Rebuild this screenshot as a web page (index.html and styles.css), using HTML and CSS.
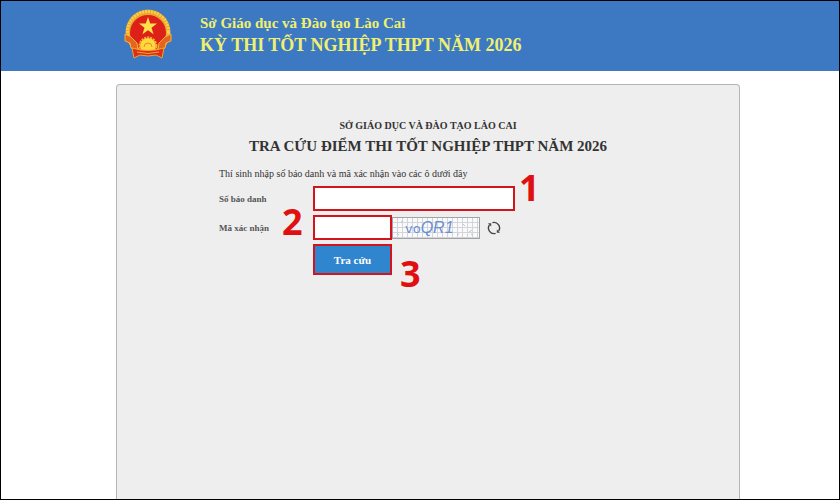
FILE: index.html
```
<!DOCTYPE html>
<html lang="vi">
<head>
  <meta charset="UTF-8">
  <meta name="viewport" content="width=device-width, initial-scale=1">
  <title>Tra cứu điểm thi tốt nghiệp THPT năm 2026</title>
  <link rel="stylesheet" href="styles.css">
</head>
<body>

  <header class="header">
    <div class="container header-inner">
      <svg class="emblem" viewBox="0 0 50 50" aria-hidden="true">
        <circle cx="25" cy="23" r="22.5" fill="#e9a52f"/>
        <circle cx="25" cy="23" r="20.5" fill="none" stroke="#f8cf48" stroke-width="3" stroke-dasharray="2 1"/>
        <circle cx="25" cy="24" r="18" fill="#de2118"/>
        <polygon points="25,8 27.2,14.6 34,14.6 28.5,18.7 30.6,25.2 25,21.2 19.4,25.2 21.5,18.7 16,14.6 22.8,14.6" fill="#ffe14d"/>
        <!-- bông lúa và dải lụa hai bên -->
        <path d="M2 25 L8 28 L14 34 L15 41 L8 39 L7 34 L2 32 Z" fill="#e5641f" stroke="#f5b23a"/>
        <path d="M48 25 L42 28 L36 34 L35 41 L42 39 L43 34 L48 32 Z" fill="#e5641f" stroke="#f5b23a"/>
        <!-- bánh răng -->
        <circle cx="25" cy="37" r="8" fill="#ffd83f"/>
        <circle cx="25" cy="37" r="8.5" fill="none" stroke="#f5b52e" stroke-width="2" stroke-dasharray="2 1"/>
        <path d="M21 38 A4 4 0 0 1 29 38" fill="none" stroke="#e98b26"/>
        <path d="M9 39 Q25 44 41 39 L39 49 L33 46 Q25 48 17 46 L11 49 Z" fill="#dc2c1a" stroke="#f0a42c"/>
        <path d="M14 43 Q25 46 36 43" fill="none" stroke="#f5a23a"/>
      </svg>
      <div class="header-text">
        <p class="dept">Sở Giáo dục và Đào tạo Lào Cai</p>
        <h1 class="exam">KỲ THI TỐT NGHIỆP THPT NĂM 2026</h1>
      </div>
    </div>
  </header>

  <main class="main">
    <div class="container panel">
      <p class="panel-dept">SỞ GIÁO DỤC VÀ ĐÀO TẠO LÀO CAI</p>
      <h2 class="panel-title">TRA CỨU ĐIỂM THI TỐT NGHIỆP THPT NĂM 2026</h2>

      <form class="form">
        <p class="hint">Thí sinh nhập số báo danh và mã xác nhận vào các ô dưới đây</p>

        <div class="row">
          <label for="sbd">Số báo danh</label>
          <div class="field">
            <input type="text" id="sbd" class="input input-long">
            <span class="step step-1">1</span>
          </div>
        </div>

        <div class="row">
          <label for="captcha">Mã xác nhận</label>
          <div class="field">
            <span class="step step-2">2</span>
            <input type="text" id="captcha" class="input input-short">
            <svg class="captcha" viewBox="0 0 88 22" role="img" aria-label="Mã xác nhận">
              <defs>
                <pattern id="grid" width="5" height="5" patternUnits="userSpaceOnUse">
                  <path d="M0 0.5 H5 M0.5 0 V5" stroke="#d3d5da" fill="none"/>
                </pattern>
              </defs>
              <rect width="88" height="22" fill="#fafafa"/>
              <rect width="88" height="22" fill="url(#grid)"/>
              <path d="M5 16l2 2M9 5l2-1M71 7l2 2M77 15l3-2M79 17l2 1M65 18l2-1" stroke="#bcc3d0"/>
              <text class="captcha-text" x="13" y="16">vo<tspan class="captcha-tilt">QR1</tspan></text>
              <rect x="0.5" y="0.5" width="87" height="21" fill="none" stroke="#a3a3a3"/>
            </svg>
            <button type="button" class="refresh" aria-label="Đổi mã xác nhận">
              <svg viewBox="0 0 14 14" aria-hidden="true">
                <path d="M5.4 1.7 A5.5 5.5 0 0 1 11.6 10 M8.6 12.3 A5.5 5.5 0 0 1 2.4 4" fill="none" stroke="#444" stroke-width="1.4"/>
                <path d="M1 2.2 L4.2 2.2 L4.2 5.4 Z M13 11.8 L9.8 11.8 L9.8 8.6 Z" fill="#444"/>
              </svg>
            </button>
          </div>
        </div>

        <div class="row">
          <span></span>
          <div class="field">
            <button type="submit" class="submit">Tra cứu</button>
            <span class="step step-3">3</span>
          </div>
        </div>
      </form>
    </div>
  </main>

</body>
</html>
```
FILE: styles.css
```
* {
  box-sizing: border-box;
}

body {
  margin: 0;
  min-height: 100vh;
  display: flex;
  flex-direction: column;
  border: 1px solid #000;
  background: #fff;
  color: #333;
  font-family: "Liberation Serif", "Times New Roman", serif;
}

p,
h1,
h2 {
  margin: 0;
}

.container {
  width: 100%;
  max-width: 624px;
  margin: 0 auto;
}

.header {
  padding: 7px 0 11px 16px;
  background: #3d79c2;
}

.header-inner {
  display: flex;
  gap: 27px;
  padding-left: 7px;
}

.emblem {
  width: 50px;
  height: 52px;
}

.header-text {
  padding-top: 5px;
  color: #f0f070;
  font-weight: bold;
}

.dept {
  font-size: 15px;
  line-height: 20px;
}

.exam {
  font-size: 18px;
  line-height: 24px;
}

.main {
  flex: 1;
  display: flex;
  padding: 13px 0 0 16px;
}

.panel {
  align-self: stretch;
  padding: 33px 16px 0;
  background: #eee;
  border: 1px solid #b4b4b4;
  border-bottom: 0;
  border-radius: 4px 4px 0 0;
}

.panel-dept {
  font-size: 10px;
  line-height: 16px;
  font-weight: bold;
  text-align: center;
}

.panel-title {
  font-size: 15px;
  line-height: 24px;
  text-align: center;
}

.form {
  max-width: 418px;
  margin: 8px auto 0;
}

.hint {
  margin-bottom: 4px;
  font-size: 10px;
  line-height: 16px;
}

.row {
  display: grid;
  grid-template-columns: 94px 1fr;
  align-items: center;
  margin-bottom: 4px;
}

.row label {
  font-size: 9px;
  font-weight: bold;
  color: #555;
}

.field {
  position: relative;
  display: flex;
  align-items: center;
}

.input {
  height: 25px;
  padding: 0 6px;
  border: 2px solid #d4141c;
  border-radius: 0;
  background: #fff;
  font: inherit;
  font-size: 12px;
}

.input-long {
  width: 202px;
}

.input-short {
  width: 79px;
}

.captcha {
  width: 88px;
  height: 22px;
}

.captcha-text {
  font-family: "DejaVu Sans", sans-serif;
  font-size: 13px;
  fill: #6a90d4;
}

.captcha-tilt {
  font-family: "Liberation Sans", Arial, sans-serif;
  font-style: italic;
  font-size: 16px;
}

.refresh {
  width: 14px;
  height: 14px;
  margin-left: 7px;
  padding: 0;
  border: 0;
  background: none;
  cursor: pointer;
}

.refresh svg {
  display: block;
}

.submit {
  width: 79px;
  height: 31px;
  padding: 0;
  border: 2px solid #d4141c;
  background: #2f86cf;
  color: #fff;
  font-family: inherit;
  font-size: 11px;
  font-weight: bold;
  cursor: pointer;
}

/* số thứ tự các bước */
.step {
  position: absolute;
  color: #e01010;
  font-family: "Open Sans", sans-serif;
  font-size: 36px;
  line-height: 36px;
  font-weight: bold;
}

.step-1 {
  left: 206px;
  top: -16px;
}

.step-2 {
  left: -31px;
  top: -11px;
}

.step-3 {
  left: 87px;
  top: 12px;
}
```
